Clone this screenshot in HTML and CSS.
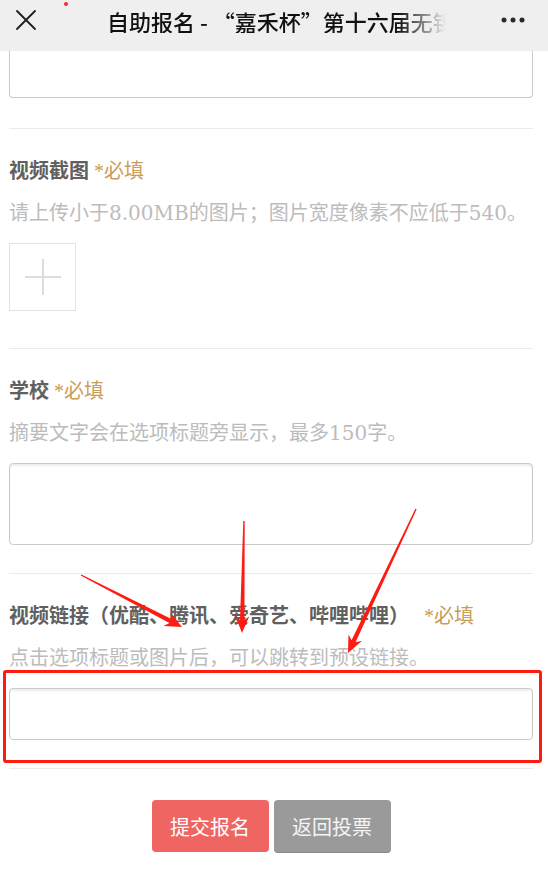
FILE: index.html
```html
<!DOCTYPE html>
<html lang="zh-CN">
<head>
<meta charset="utf-8">
<title>自助报名</title>
<link rel="stylesheet" href="styles.css">
</head>
<body>
<div class="page">
  <header class="topbar">
    <button class="icon-btn close" aria-label="关闭">
      <svg width="22" height="22" viewBox="0 0 22 22"><path d="M2 2 L20 20 M20 2 L2 20" stroke="#1e1e1e" stroke-width="1.8" fill="none" stroke-linecap="round"/></svg>
    </button>
    <div class="title">自助报名 - “嘉禾杯”第十六届无锡市中小学生微电影大赛</div>
    <button class="icon-btn more" aria-label="更多">
      <svg width="28" height="8" viewBox="0 0 28 8"><circle cx="4" cy="4" r="2.5" fill="#2a2a2a"/><circle cx="13" cy="4" r="2.5" fill="#2a2a2a"/><circle cx="22" cy="4" r="2.5" fill="#2a2a2a"/></svg>
    </button>
    <span class="rec-dot"></span>
  </header>

  <main class="form">
    <div class="field first">
      <input class="input cut" type="text">
    </div>

    <div class="field">
      <div class="label">视频截图 <span class="req">*必填</span></div>
      <div class="desc">请上传小于8.00MB的图片；图片宽度像素不应低于540。</div>
      <div class="upload">
        <svg width="36" height="36" viewBox="0 0 36 36"><path d="M18 0 V36 M0 18 H36" stroke="#dcdcdc" stroke-width="2" fill="none"/></svg>
      </div>
    </div>

    <div class="field">
      <div class="label">学校 <span class="req">*必填</span></div>
      <div class="desc">摘要文字会在选项标题旁显示，最多150字。</div>
      <textarea class="input area"></textarea>
    </div>

    <div class="field">
      <div class="label">视频链接（优酷、腾讯、爱奇艺、哔哩哔哩）&nbsp;&nbsp; <span class="req">*必填</span></div>
      <div class="desc">点击选项标题或图片后，可以跳转到预设链接。</div>
      <input class="input line" type="text">
    </div>

    <div class="actions">
      <button class="btn submit">提交报名</button>
      <button class="btn back">返回投票</button>
    </div>
  </main>

  <div class="mark-box"></div>
  <svg class="arrows" width="548" height="876" viewBox="0 0 548 876">
    <polygon fill="#ff1a12" points="81.32,574.38 171.45,619.09 170.32,612.55 182,627 163.46,625.89 169.43,623.01 80.68,575.62"/>
    <polygon fill="#ff1a12" points="244.70,521.01 244.43,620.04 249.30,616.13 242,633 235.30,615.87 240.03,619.96 243.30,520.99"/>
    <polygon fill="#ff1a12" points="416.63,509.30 355.54,642.19 362.04,640.83 348,653 348.48,634.43 351.56,640.31 415.37,508.70"/>
  </svg>
</div>
</body>
</html>
```
FILE: styles.css
```css
* { box-sizing: border-box; }

html, body {
  margin: 0;
  padding: 0;
  background: #fff;
}

body {
  font-family: "Liberation Serif", "Noto Sans CJK SC", serif;
  overflow: hidden;
}

.page {
  position: relative;
  width: 548px;
  height: 876px;
  overflow: hidden;
}

.topbar {
  position: relative;
  height: 51px;
  background: #efefef;
  display: flex;
  align-items: flex-start;
  padding-top: 9px;
}

.icon-btn {
  border: 0;
  background: none;
  padding: 0;
  display: flex;
  align-items: center;
  justify-content: center;
}

.close {
  width: 22px;
  height: 22px;
  margin-left: 15px;
}

.title {
  margin-left: 70px;
  width: 339px;
  height: 24px;
  font-family: "Noto Sans CJK SC", sans-serif;
  font-size: 22px;
  font-weight: 500;
  line-height: 24px;
  color: #111;
  white-space: nowrap;
  overflow: hidden;
  -webkit-mask-image: linear-gradient(to right, #000 0, #000 86%, transparent 100%);
  mask-image: linear-gradient(to right, #000 0, #000 86%, transparent 100%);
}

.more {
  width: 28px;
  height: 22px;
  margin-left: 54px;
}

.rec-dot {
  position: absolute;
  left: 64px;
  top: 2px;
  width: 4px;
  height: 4px;
  border-radius: 50%;
  background: #ff2a2a;
}

.form {
  padding: 0 15px 0 9px;
}

.field {
  border-top: 1px solid #ebebeb;
  padding: 28px 0 28px;
}

.field.first {
  border-top: 0;
  padding: 0 0 30px;
}

.label {
  font-size: 20px;
  line-height: 28px;
  height: 28px;
  font-weight: bold;
  color: #606060;
  white-space: nowrap;
}

.req {
  font-weight: normal;
  color: #c99c5a;
}

.desc {
  margin-top: 14px;
  font-family: "DejaVu Serif", "Noto Sans CJK SC", serif;
  font-size: 20px;
  line-height: 28px;
  height: 28px;
  color: #bcbcbc;
  white-space: nowrap;
  font-variant-numeric: oldstyle-nums;
}

.input {
  display: block;
  width: 100%;
  margin: 16px 0 0;
  padding: 0 8px;
  border: 1px solid #cacaca;
  border-radius: 4px;
  background: #fff;
  box-shadow: inset 0 2px 2px rgba(0, 0, 0, 0.07);
  font: inherit;
  outline: none;
  -webkit-appearance: none;
  appearance: none;
}

.input.cut {
  margin-top: 0;
  height: 47px;
  border-top: 0;
  border-radius: 0 0 4px 4px;
  box-shadow: none;
}

.input.area {
  height: 82px;
  resize: none;
}

.input.line {
  height: 52px;
}

.upload {
  margin-top: 16px;
  margin-bottom: 9px;
  width: 67px;
  height: 68px;
  border: 1px solid #e2e2e2;
  display: flex;
  align-items: center;
  justify-content: center;
}

.actions {
  border-top: 1px solid #ebebeb;
  padding-top: 31px;
  display: flex;
  justify-content: center;
  gap: 5px;
}

.btn {
  width: 117px;
  height: 52px;
  border: 0;
  border-radius: 4px;
  font-family: "Noto Sans CJK SC", sans-serif;
  font-size: 20px;
  color: #fff;
  padding: 0;
}

.submit {
  background: #ee6562;
}

.back {
  background: #9a9a9a;
  color: #f4f4f4;
  box-shadow: 0 1px 0 #8a8a8a;
}

.mark-box {
  position: absolute;
  left: 3px;
  top: 670px;
  width: 539px;
  height: 93px;
  border: 3px solid #ff1a12;
  border-radius: 3px;
  pointer-events: none;
}

.arrows {
  position: absolute;
  left: 0;
  top: 0;
  pointer-events: none;
}
```
